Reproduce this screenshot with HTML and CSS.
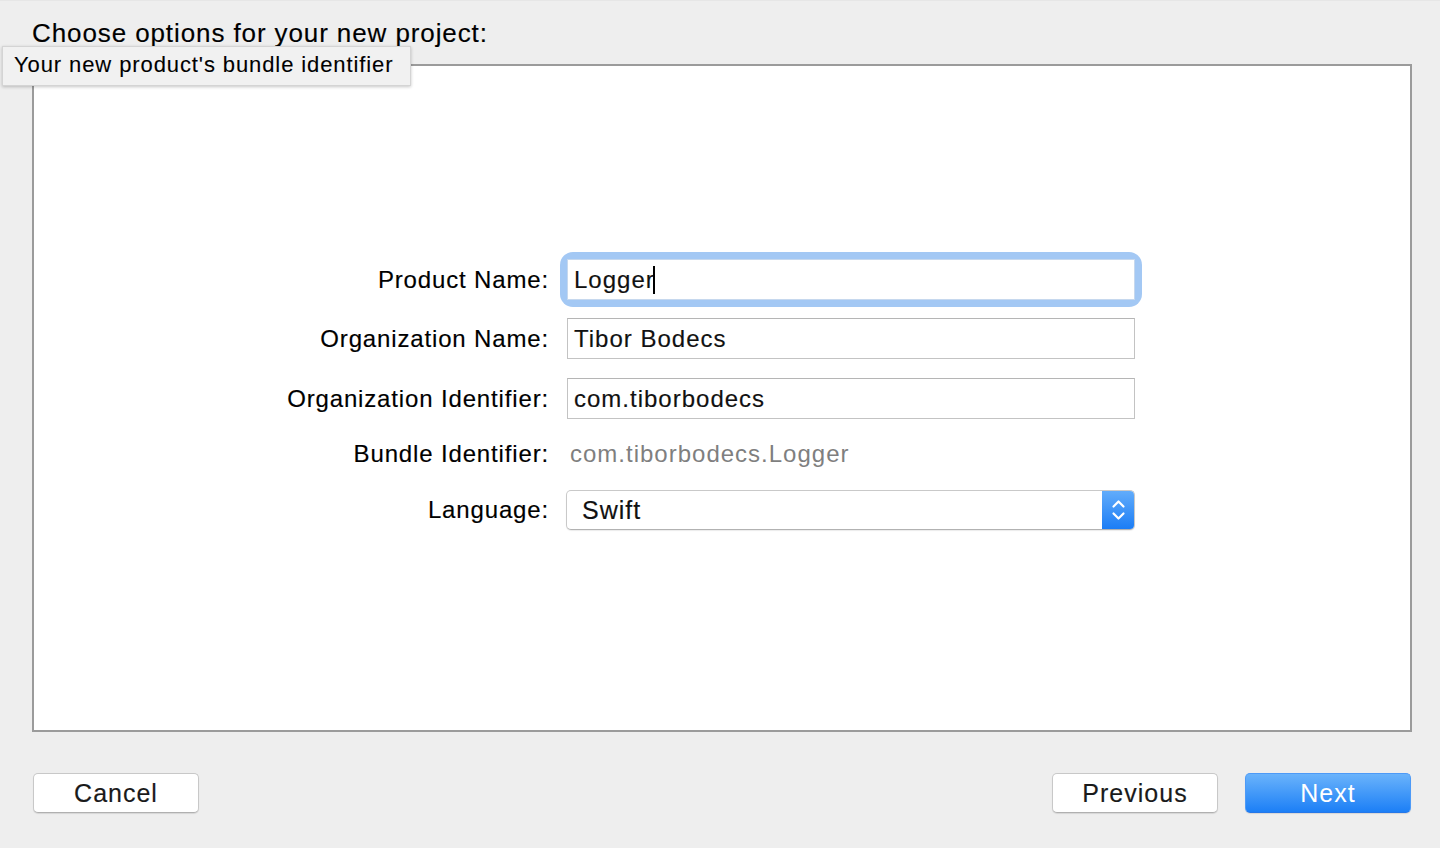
FILE: index.html
```html
<!DOCTYPE html>
<html>
<head>
<meta charset="utf-8">
<link rel="stylesheet" href="styles.css">
</head>
<body>
<div class="window">
  <div class="title">Choose options for your new project:</div>
  <div class="panel">
    <div class="form">
      <div class="row r1">
        <div class="label">Product Name:</div>
        <div class="ring"><div class="field">Logger<span class="caret"></span></div></div>
      </div>
      <div class="row r2">
        <div class="label">Organization Name:</div>
        <div class="field">Tibor Bodecs</div>
      </div>
      <div class="row r3">
        <div class="label">Organization Identifier:</div>
        <div class="field">com.tiborbodecs</div>
      </div>
      <div class="row r4">
        <div class="label">Bundle Identifier:</div>
        <div class="static">com.tiborbodecs.Logger</div>
      </div>
      <div class="row r5">
        <div class="label">Language:</div>
        <div class="popup">
          <span class="popup-text">Swift</span>
          <span class="stepper">
            <svg width="33" height="40" viewBox="0 0 33 40"><polyline points="11.5,16.5 16.5,11.5 21.5,16.5" fill="none" stroke="#fff" stroke-width="2.2" stroke-linecap="round" stroke-linejoin="round"/><polyline points="11.5,23.5 16.5,28.5 21.5,23.5" fill="none" stroke="#fff" stroke-width="2.2" stroke-linecap="round" stroke-linejoin="round"/></svg>
          </span>
        </div>
      </div>
    </div>
  </div>
  <div class="footer">
    <div class="btn">Cancel</div>
    <div class="spacer"></div>
    <div class="btn">Previous</div>
    <div class="btn primary">Next</div>
  </div>
  <div class="tooltip">Your new product's bundle identifier</div>
</div>
</body>
</html>
```
FILE: styles.css
```css
html, body {
  margin: 0;
  padding: 0;
  background: #eeeeee;
}
body {
  font-family: "Liberation Sans", Arial, sans-serif;
  color: #111;
}
.window {
  position: relative;
  width: 1440px;
  height: 848px;
  overflow: hidden;
  border-top: 1px solid #e6e6e6;
  box-sizing: border-box;
}
.title {
  padding-top: 17px;
  padding-left: 32px;
  height: 30px;
  line-height: 30px;
  font-size: 26px;
  letter-spacing: 0.9px;
  color: #000;
  -webkit-text-stroke: 0.15px #000;
}
.panel {
  margin-top: 16px;
  margin-left: 32px;
  width: 1380px;
  height: 668px;
  box-sizing: border-box;
  border: 2px solid #9b9b9b;
  background: #fff;
}
.form {
  margin-top: 184px;
  display: flex;
  flex-direction: column;
}
.row {
  display: grid;
  grid-template-columns: 514px 568px;
  column-gap: 19px;
  align-items: center;
}
.r1 { height: 59px; }
.r2 { height: 59px; }
.r3 { height: 61px; }
.r4 { height: 49px; }
.r5 { height: 64px; }
.label {
  text-align: right;
  font-size: 24px;
  letter-spacing: 0.85px;
  margin-right: -1px;
  color: #000;
  -webkit-text-stroke: 0.15px #000;
}
.ring {
  border-radius: 6px;
  box-shadow: 0 0 0 7px #a3c8f4;
  background: #a3c8f4;
}
.field {
  position: relative;
  height: 41px;
  box-sizing: border-box;
  border: 1px solid #c3c3c3;
  border-top-color: #b5b5b5;
  background: #fff;
  font-size: 24px;
  letter-spacing: 1px;
  line-height: 39px;
  padding-left: 6px;
  color: #111;
  -webkit-text-stroke: 0.15px #111;
}
.ring .field {
  border-color: #c6d8ee;
}
.caret {
  display: inline-block;
  width: 2px;
  height: 28px;
  background: #000;
  vertical-align: -6px;
  margin-left: -2px;
}
.static {
  font-size: 24px;
  letter-spacing: 1px;
  padding-left: 3px;
  color: #7f7f7f;
}
.popup {
  position: relative;
  height: 40px;
  margin-left: -1px;
  box-sizing: border-box;
  border: 1px solid #c9c9c9;
  border-bottom-color: #b2b2b2;
  border-radius: 5px;
  background: #fff;
  box-shadow: 0 1px 1px rgba(0,0,0,0.08);
  display: flex;
  align-items: center;
  overflow: hidden;
}
.popup-text {
  flex: 1;
  font-size: 25px;
  letter-spacing: 1px;
  padding-left: 15px;
  color: #111;
  -webkit-text-stroke: 0.15px #111;
}
.stepper {
  width: 33px;
  height: 40px;
  margin-right: -1px;
  margin-top: -1px;
  margin-bottom: -1px;
  background: linear-gradient(#63adfb, #1a7cf5);
  border-radius: 0 5px 5px 0;
  display: flex;
}
.footer {
  display: flex;
  margin-top: 41px;
  padding-left: 33px;
  width: 1411px;
  box-sizing: border-box;
  gap: 27px;
}
.spacer { flex: 1; }
.btn {
  width: 166px;
  height: 40px;
  box-sizing: border-box;
  border: 1px solid #c8c8c8;
  border-bottom-color: #b0b0b0;
  border-radius: 5px;
  background: #fff;
  box-shadow: 0 1px 1px rgba(0,0,0,0.1);
  text-align: center;
  font-size: 25px;
  letter-spacing: 1px;
  line-height: 38px;
  color: #1a1a1a;
  -webkit-text-stroke: 0.15px #1a1a1a;
}
.primary {
  background: linear-gradient(#6ab3fb, #1c7ff6);
  border-color: #4d9af7;
  border-bottom-color: #2577e8;
  color: #fff;
  -webkit-text-stroke: 0;
}
.tooltip {
  position: absolute;
  left: 2px;
  top: 45px;
  width: 409px;
  height: 40px;
  box-sizing: border-box;
  background: #f1f1f1;
  border: 1px solid #d4d4d4;
  box-shadow: 0 1px 3px rgba(0,0,0,0.22);
  font-size: 22px;
  letter-spacing: 0.9px;
  line-height: 36px;
  padding-left: 11px;
  color: #000;
  -webkit-text-stroke: 0.1px #000;
}
```
